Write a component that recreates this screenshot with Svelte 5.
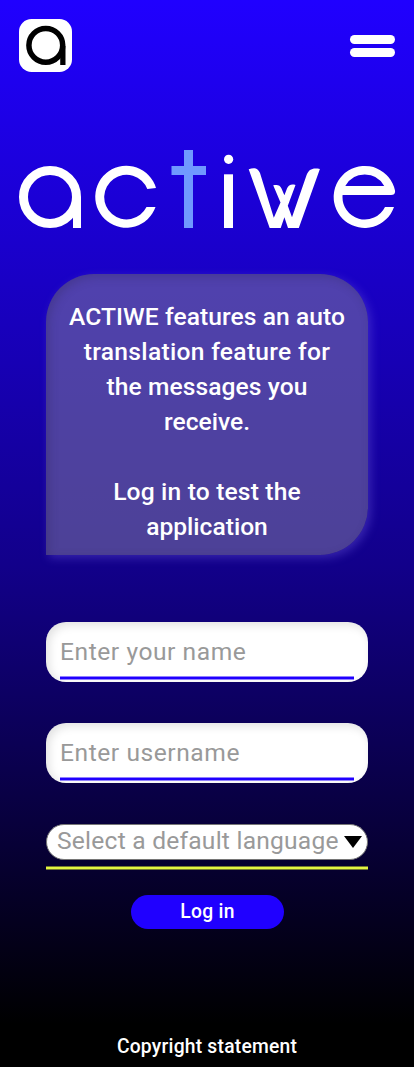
<script>
  const intro = [
    { text: 'ACTIWE features an auto', spacing: 0.07 },
    { text: 'translation feature for', spacing: 0.3 },
    { text: 'the messages you', spacing: 0.07 },
    { text: 'receive.', spacing: 0 },
    { text: '', spacing: 0 },
    { text: 'Log in to test the', spacing: 0.17 },
    { text: 'application', spacing: 0 }
  ];
</script>

<div class="page">
  <header>
    <svg class="badge" width="53" height="53" viewBox="0 0 53 53" aria-label="Home">
      <rect width="53" height="53" rx="12.5" fill="#fff" />
      <circle cx="26.8" cy="26.3" r="16.9" fill="none" stroke="#000" stroke-width="5.5" />
      <path d="M41.2 27H46.5V46H41.2Z" fill="#000" />
    </svg>
    <button class="menu" aria-label="Menu"><span></span><span></span></button>
  </header>

  <svg class="logo" width="378" height="80" viewBox="18 149 378 80" aria-label="actiwe">
    <circle cx="50" cy="197" r="26.5" fill="none" stroke="#fff" stroke-width="9" />
    <path d="M73 197H81V228H73Z" fill="#fff" />
    <path d="M184 150H193V166H206V175H193V228H184V175H171.5V166H184Z" fill="#7099ff" />
    <g fill="#fff">
      <path d="M156 188A31 31 0 1 0 155.5 207H146.5A22.3 22.3 0 1 1 147.3 189Z" />
      <circle cx="228.6" cy="159.3" r="4.6" />
      <path d="M224 174.3H233V228H224Z" />
      <path d="M248.7 169.3C254 167.3 258 168 260 173L273.8 217.7L280.5 202.5L273.2 185.3C277.5 184.4 280 185 281.5 188.5L284.4 195.3L287 188.5C288.5 184.8 291.5 184 295.5 185L287.8 205.7L292 217.3L306.6 175C308.8 169.5 312.5 167.5 319.9 169L298.8 228H288L284.4 217.3L280.7 228H269.7Z" />
      <path fill-rule="evenodd" d="M394 207H385A22.4 22.4 0 0 1 342.6 195H391C394 195 395.4 193.5 395 190.5A31 31 0 1 0 394 207ZM345.3 186A22.3 22.3 0 0 1 384.2 186Z" />
    </g>
  </svg>

  <section class="card">
    {#each intro as line}
      <span style:letter-spacing="{line.spacing}px">{line.text}</span>
    {/each}
  </section>

  <form>
    <label class="field"><span>Enter your name</span></label>
    <label class="field"><span>Enter username</span></label>
    <div class="language">
      <div class="select">
        <span>Select a default language</span>
        <svg width="18" height="12" viewBox="0 0 18 12"><path d="M0 0H18L9 12Z" fill="#000" /></svg>
      </div>
    </div>
    <button class="login" type="button">Log in</button>
  </form>

  <footer>Copyright statement</footer>
</div>

<style>
  :global(body) { margin: 0; }
  .page {
    box-sizing: border-box;
    width: 414px;
    height: 1067px;
    overflow: hidden;
    display: flex;
    flex-direction: column;
    font-family: Roboto, "Liberation Sans", sans-serif;
    background: linear-gradient(#2000ff 0, #12008a 53%, #000 96%);
  }
  header {
    height: 53px;
    margin: 19px 19px 0;
    display: flex;
    justify-content: space-between;
  }
  button { border: 0; padding: 0; font-family: inherit; }
  .menu {
    width: 45px;
    padding-top: 16px;
    background: none;
    display: flex;
    flex-direction: column;
    gap: 4px;
  }
  .menu span { height: 9px; width: 45px; border-radius: 5px; background: #fff; }
  .logo { margin: 77px 0 0 18px; flex: none; }
  .card {
    box-sizing: border-box;
    flex: none;
    width: 322px;
    height: 281px;
    margin: 45px 0 0 46px;
    padding-top: 25px;
    border-radius: 48px 48px 48px 0;
    background: rgba(116, 108, 158, 0.6);
    box-shadow: 3px 3px 10px rgba(110, 90, 220, 0.4), inset 3px 3px 10px rgba(50, 40, 90, 0.33);
    color: #fff;
    font-size: 24.6px;
    font-weight: 500;
    text-align: center;
  }
  .card span { display: block; height: 35px; line-height: 35px; white-space: nowrap; }
  form { display: flex; flex-direction: column; margin: 67px 46px 0; }
  .field {
    box-sizing: border-box;
    height: 60px;
    padding: 0 14px 2px;
    margin-bottom: 41px;
    border-radius: 20px;
    background: #fff;
    box-shadow: inset 3px 3px 10px rgba(0, 0, 0, 0.12);
    display: flex;
  }
  .field span {
    flex: 1;
    background: linear-gradient(#9080ff 1px, #2000ff 1px, #2000ff 3px, #9080ff 3px) bottom / 100% 4px no-repeat;
    color: #999;
    font-size: 24.6px;
    line-height: 60px;
    letter-spacing: 0.55px;
  }
  .language {
    height: 46px;
    background: linear-gradient(#75792f 1px, #e3f542 1px, #e3f542 3px, #75792f 3px) bottom / 100% 4px no-repeat;
  }
  .select {
    box-sizing: border-box;
    height: 36px;
    border: 1px solid #767676;
    border-radius: 18px;
    background: #fff;
    padding: 0 5px 0 10px;
    display: flex;
    align-items: center;
    justify-content: space-between;
    color: #999;
    font-size: 24.6px;
    white-space: nowrap;
    letter-spacing: 0.22px;
  }
  .select span { line-height: 30px; padding-bottom: 2px; }
  .login {
    width: 153px;
    height: 34px;
    margin: 25px 0 0 85px;
    border-radius: 17px;
    background: #2000ff;
    color: #fff;
    font-size: 19.3px;
    letter-spacing: 0.3px;
    font-weight: 500;
    line-height: 34px;
  }
  footer {
    margin-top: 106px;
    color: #fff;
    font-size: 19.3px;
    letter-spacing: 0.22px;
    font-weight: 500;
    line-height: 24px;
    text-align: center;
  }
</style>
